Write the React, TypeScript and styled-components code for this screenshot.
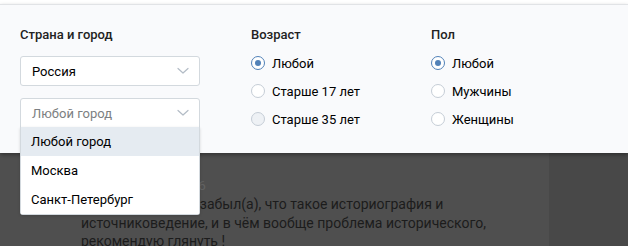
import styled, { createGlobalStyle } from 'styled-components';

const GlobalStyle = createGlobalStyle`
  html, body {
    margin: 0;
    padding: 0;
    background: #4e4e4e;
    font-family: Roboto, "Open Sans", "DejaVu Sans", sans-serif;
    -webkit-font-smoothing: antialiased;
  }
`;

const Page = styled.div`
  width: 628px;
  height: 246px;
  overflow: hidden;
  background: #ffffff;
  display: flex;
  flex-direction: column;
`;

const TopStrip = styled.div`
  height: 4px;
  flex-shrink: 0;
  background: #ffffff;
`;

const FilterPanel = styled.div`
  position: relative;
  z-index: 2;
  height: 149px;
  flex-shrink: 0;
  box-sizing: border-box;
  background: #f9fafc;
  border-top: 1px solid #e1e3e6;
  box-shadow: 0 2px 4px rgba(0, 0, 0, 0.35);
  display: flex;
  gap: 51px;
  padding: 22px 0 0 20px;
`;

const Column = styled.div<{ $width: number }>`
  width: ${(p) => p.$width}px;
  display: flex;
  flex-direction: column;
`;

const Heading = styled.div`
  font-size: 13px;
  line-height: 16px;
  font-weight: 500;
  color: #222222;
  margin-bottom: 13px;
`;

const SelectWrap = styled.div`
  position: relative;
  display: flex;
  flex-direction: column;
  gap: 12px;
`;

const Select = styled.div<{ $open?: boolean }>`
  height: 30px;
  box-sizing: border-box;
  background: #ffffff;
  border: 1px solid #d3d9de;
  border-radius: ${(p) => (p.$open ? '3px 3px 0 0' : '3px')};
  display: flex;
  align-items: center;
  justify-content: space-between;
  padding: 0 10px 0 11px;
  font-size: 13px;
  color: ${(p) => (p.$open ? '#7c7f82' : '#000000')};
`;

const Chevron = () => (
  <svg width="12" height="8" viewBox="0 0 12 8" fill="none">
    <path d="M1 1.5 L6 6 L11 1.5" stroke="#b3bcc6" strokeWidth="1.2" strokeLinecap="round" strokeLinejoin="round" />
  </svg>
);

const DropList = styled.div`
  position: absolute;
  top: 71px;
  left: 0;
  width: 180px;
  box-sizing: border-box;
  background: #ffffff;
  border: 1px solid #d3d9de;
  border-top: none;
  border-radius: 0 0 3px 3px;
  box-shadow: 0 1px 3px rgba(0, 0, 0, 0.15);
  z-index: 3;
`;

const DropItem = styled.div<{ $active?: boolean }>`
  height: 29px;
  display: flex;
  align-items: center;
  padding-left: 10px;
  font-size: 13px;
  color: #000000;
  background: ${(p) => (p.$active ? '#e5ebf1' : '#ffffff')};
`;

const RadioList = styled.div`
  display: flex;
  flex-direction: column;
  margin-top: -7px;
`;

const RadioRow = styled.div`
  height: 28px;
  display: flex;
  align-items: center;
  gap: 7px;
  font-size: 13px;
  color: #000000;
`;

const RadioCircle = styled.span<{ $checked?: boolean; $disabled?: boolean }>`
  width: 14px;
  height: 14px;
  box-sizing: border-box;
  border-radius: 50%;
  border: 1px solid ${(p) => (p.$checked ? '#5181b8' : '#c5cdd6')};
  background: ${(p) => (p.$disabled ? '#eef1f5' : '#ffffff')};
  display: flex;
  align-items: center;
  justify-content: center;

  &::after {
    content: '';
    display: ${(p) => (p.$checked ? 'block' : 'none')};
    width: 6px;
    height: 6px;
    border-radius: 50%;
    background: #5181b8;
  }
`;

const Backdrop = styled.div`
  flex: 1;
  display: flex;
  background: #4f4f4f;
`;

const FeedColumn = styled.div`
  width: 549px;
  padding: 24px 0 0 81px;
  box-sizing: border-box;
`;

const SideColumn = styled.div`
  flex: 1;
  background: #484848;
`;

const PostDate = styled.div`
  font-size: 13.5px;
  line-height: 16px;
  color: #626262;
  margin-bottom: 2px;
`;

const PostText = styled.div`
  font-size: 14px;
  line-height: 18.5px;
  color: #1c1c1c;
`;

function Radio({ label, checked, disabled }: { label: string; checked?: boolean; disabled?: boolean }) {
  return (
    <RadioRow>
      <RadioCircle $checked={checked} $disabled={disabled} />
      {label}
    </RadioRow>
  );
}

export default function App() {
  return (
    <Page>
      <GlobalStyle />
      <TopStrip />
      <FilterPanel>
        <Column $width={180}>
          <Heading>Страна и город</Heading>
          <SelectWrap>
            <Select>
              Россия
              <Chevron />
            </Select>
            <Select $open>
              Любой город
              <Chevron />
            </Select>
            <DropList>
              <DropItem $active>Любой город</DropItem>
              <DropItem>Москва</DropItem>
              <DropItem>Санкт-Петербург</DropItem>
            </DropList>
          </SelectWrap>
        </Column>
        <Column $width={129}>
          <Heading>Возраст</Heading>
          <RadioList>
            <Radio label="Любой" checked />
            <Radio label="Старше 17 лет" />
            <Radio label="Старше 35 лет" disabled />
          </RadioList>
        </Column>
        <Column $width={150}>
          <Heading>Пол</Heading>
          <RadioList>
            <Radio label="Любой" checked />
            <Radio label="Мужчины" />
            <Radio label="Женщины" />
          </RadioList>
        </Column>
      </FilterPanel>
      <Backdrop>
        <FeedColumn>
          <PostDate>23 сентября в 12:06</PostDate>
          <PostText>
            Если вдруг кто-то забыл(а), что такое историография и
            <br />
            источниковедение, и в чём вообще проблема исторического,
            <br />
            рекомендую глянуть !
          </PostText>
        </FeedColumn>
        <SideColumn />
      </Backdrop>
    </Page>
  );
}
